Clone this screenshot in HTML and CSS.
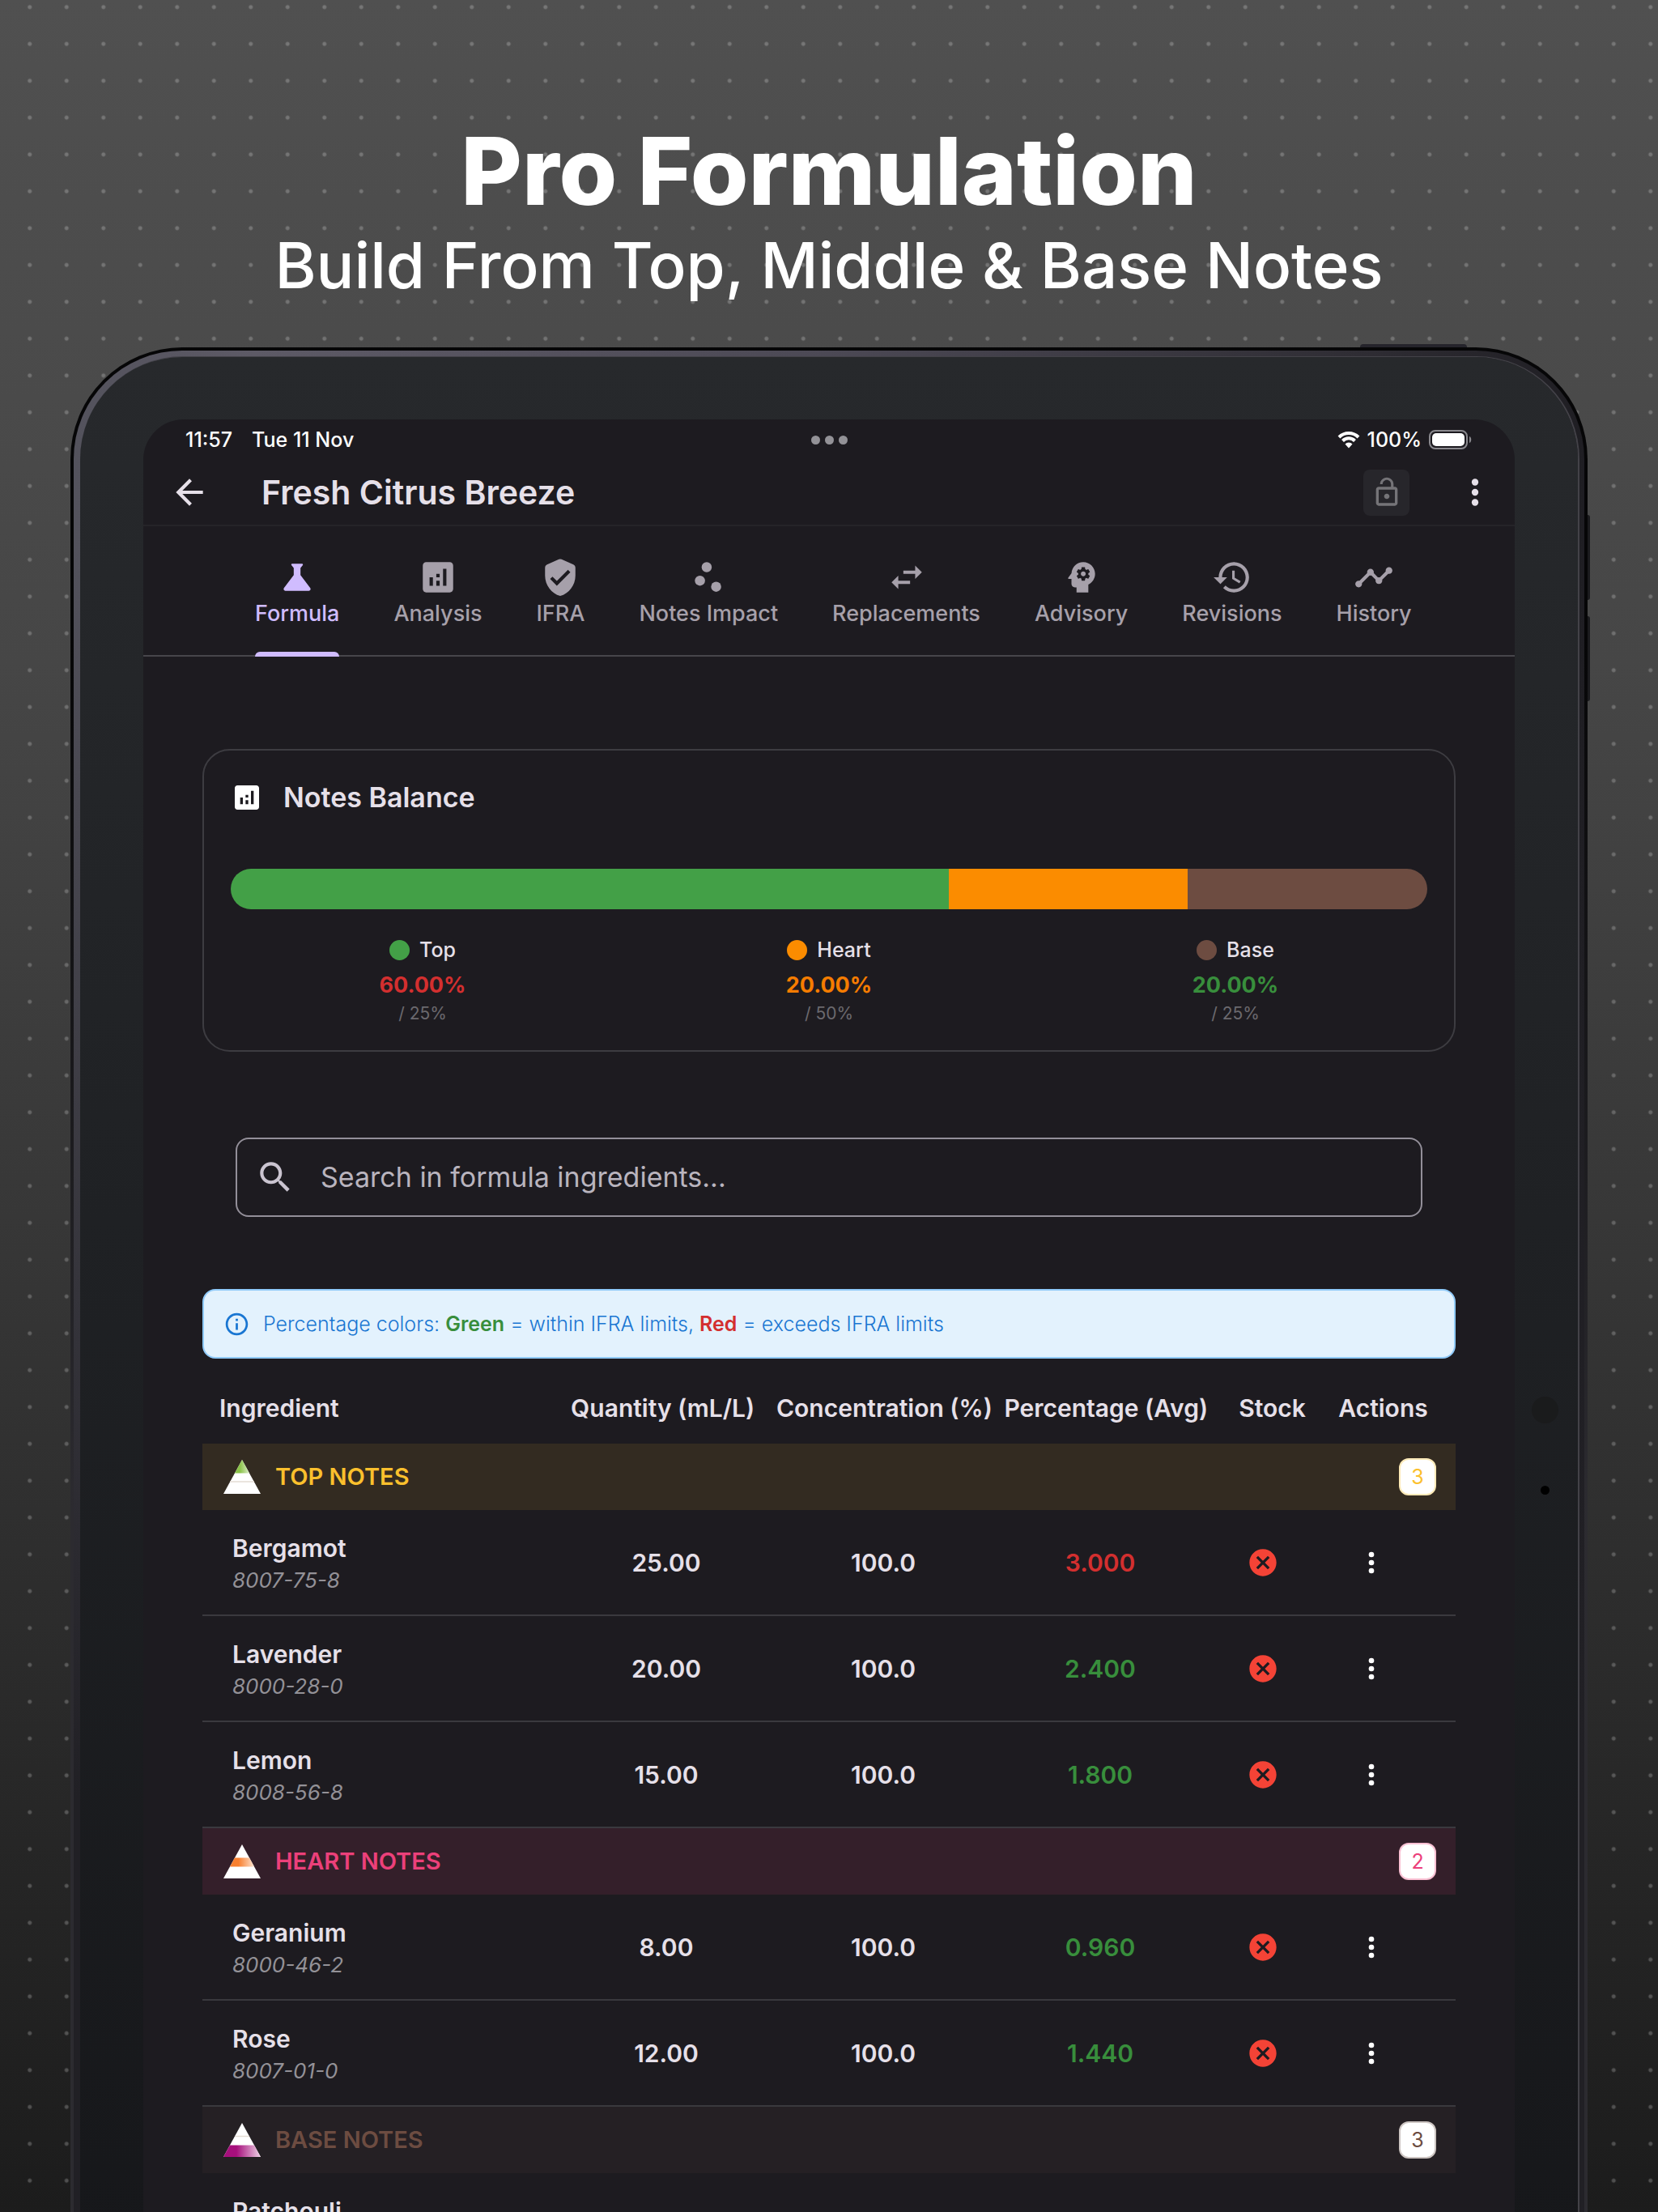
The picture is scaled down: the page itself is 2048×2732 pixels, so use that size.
FILE: index.html
```html
<!DOCTYPE html>
<html lang="en">

<head>
    <meta charset="UTF-8">
    <meta name="viewport" content="width=device-width, initial-scale=1.0">
    <title>Pro Formulation</title>
    <link rel="stylesheet" href="styles.css">
</head>

<body>
    <!-- shared icons -->
    <svg class="sprite" aria-hidden="true">
        <symbol id="i-back" viewBox="0 0 24 24"><path d="M20 11H7.83l5.59-5.59L12 4l-8 8 8 8 1.41-1.41L7.83 13H20v-2z"/></symbol>
        <symbol id="i-lock" viewBox="0 0 24 24"><path d="M12 17c1.1 0 2-.9 2-2s-.9-2-2-2-2 .9-2 2 .9 2 2 2zm6-9h-1V6c0-2.76-2.24-5-5-5S7 3.24 7 6h1.9c0-1.71 1.39-3.1 3.1-3.1 1.71 0 3.1 1.39 3.1 3.1v2H6c-1.1 0-2 .9-2 2v10c0 1.1.9 2 2 2h12c1.1 0 2-.9 2-2V10c0-1.1-.9-2-2-2zm0 12H6V10h12v10z"/></symbol>
        <symbol id="i-more" viewBox="0 0 24 24"><circle cx="12" cy="6" r="2"/><circle cx="12" cy="12" r="2"/><circle cx="12" cy="18" r="2"/></symbol>
        <symbol id="i-flask" viewBox="0 0 24 24"><path d="M19.8 18.4L14 10.67V6.5l1.35-1.69c.26-.33.03-.81-.39-.81H9.04c-.42 0-.65.48-.39.81L10 6.5v4.17L4.2 18.4c-.49.66-.02 1.6.8 1.6h14c.82 0 1.29-.94.8-1.6z"/></symbol>
        <symbol id="i-analytics" viewBox="0 0 24 24"><path d="M19 3H5c-1.1 0-2 .9-2 2v14c0 1.1.9 2 2 2h14c1.1 0 2-.9 2-2V5c0-1.1-.9-2-2-2zM9 17H7v-5h2v5zm4 0h-2v-3h2v3zm0-5h-2v-2h2v2zm4 5h-2V7h2v10z"/></symbol>
        <symbol id="i-shield" viewBox="0 0 24 24"><path d="M11.2 1.35L4.2 4.45C3.47 4.78 3 5.5 3 6.3V11c0 5.55 3.84 10.74 9 12 5.16-1.26 9-6.45 9-12V6.3c0-.8-.47-1.52-1.2-1.85l-7-3.1a2 2 0 0 0-1.6 0zM10 17l-4-4 1.41-1.41L10 14.17l6.59-6.59L18 9l-8 8z"/></symbol>
        <symbol id="i-scatter" viewBox="0 0 24 24"><circle cx="7" cy="14" r="3"/><circle cx="11" cy="6" r="3"/><circle cx="16.6" cy="17.6" r="3"/></symbol>
        <symbol id="i-swap" viewBox="0 0 24 24"><path d="M6.99 11L3 15l3.99 4v-3H14v-2H6.99v-3zM21 9l-3.99-4v3H10v2h7.01v3L21 9z"/></symbol>
        <symbol id="i-psychology" viewBox="0 0 24 24"><path d="M13 8.57c-.79 0-1.43.64-1.43 1.43s.64 1.43 1.43 1.43 1.43-.64 1.43-1.43-.64-1.43-1.43-1.43z"/><path d="M13 3C9.25 3 6.2 5.94 6.02 9.64L4.1 12.2c-.25.33-.01.8.4.8H6v3c0 1.1.9 2 2 2h1v3h7v-4.68c2.36-1.12 4-3.53 4-6.32 0-3.87-3.13-7-7-7zm3 7c0 .13-.01.26-.02.39l.83.66c.08.06.1.16.05.25l-.8 1.39c-.05.09-.16.12-.24.09l-.99-.4c-.21.16-.43.29-.67.39L14 13.83c-.01.1-.1.17-.2.17h-1.6c-.1 0-.18-.07-.2-.17l-.15-1.06c-.25-.1-.47-.23-.68-.39l-.99.4c-.09.03-.2 0-.25-.09l-.8-1.39c-.05-.08-.03-.19.05-.25l.84-.66c-.01-.13-.02-.26-.02-.39s.02-.27.04-.39l-.85-.66c-.08-.06-.1-.16-.05-.26l.8-1.38c.05-.09.15-.12.24-.09l1 .4c.2-.15.43-.29.67-.39L12 6.17c.02-.1.1-.17.2-.17h1.6c.1 0 .18.07.2.17l.15 1.06c.24.1.46.23.67.39l1-.4c.09-.03.2 0 .24.09l.8 1.38c.05.09.03.2-.05.26l-.85.66c.03.12.04.25.04.39z"/></symbol>
        <symbol id="i-history" viewBox="0 0 24 24"><path d="M13 3c-4.97 0-9 4.03-9 9H1l3.89 3.89.07.14L9 12H6c0-3.87 3.13-7 7-7s7 3.13 7 7-3.13 7-7 7c-1.93 0-3.68-.79-4.94-2.06l-1.42 1.42C8.27 19.99 10.51 21 13 21c4.97 0 9-4.03 9-9s-4.03-9-9-9zm-1 5v5l4.28 2.54.72-1.21-3.5-2.08V8H12z"/></symbol>
        <symbol id="i-timeline" viewBox="0 0 24 24"><path d="M23 8c0 1.1-.9 2-2 2-.18 0-.35-.02-.51-.07l-3.56 3.55c.05.16.07.34.07.52 0 1.1-.9 2-2 2s-2-.9-2-2c0-.18.02-.36.07-.52l-2.55-2.55c-.16.05-.34.07-.52.07s-.36-.02-.52-.07l-4.55 4.56c.05.16.07.33.07.51 0 1.1-.9 2-2 2s-2-.9-2-2 .9-2 2-2c.18 0 .35.02.51.07l4.56-4.55C8.02 9.36 8 9.18 8 9c0-1.1.9-2 2-2s2 .9 2 2c0 .18-.02.36-.07.52l2.55 2.55c.16-.05.34-.07.52-.07s.36.02.52.07l3.55-3.56C19.02 8.35 19 8.18 19 8c0-1.1.9-2 2-2s2 .9 2 2z"/></symbol>
        <symbol id="i-search" viewBox="0 0 24 24"><path d="M15.5 14h-.79l-.28-.27C15.41 12.59 16 11.11 16 9.5 16 5.91 13.09 3 9.5 3S3 5.91 3 9.5 5.91 16 9.5 16c1.61 0 3.09-.59 4.23-1.57l.27.28v.79l5 4.99L20.49 19l-4.99-5zm-6 0C7.01 14 5 11.99 5 9.5S7.01 5 9.5 5 14 7.01 14 9.5 11.99 14 9.5 14z"/></symbol>
        <symbol id="i-info" viewBox="0 0 24 24"><path d="M11 7h2v2h-2zm0 4h2v6h-2zm1-9C6.48 2 2 6.48 2 12s4.48 10 10 10 10-4.48 10-10S17.52 2 12 2zm0 18c-4.41 0-8-3.59-8-8s3.59-8 8-8 8 3.59 8 8-3.59 8-8 8z"/></symbol>
        <symbol id="i-cancel" viewBox="0 0 24 24"><path d="M12 2C6.47 2 2 6.47 2 12s4.47 10 10 10 10-4.47 10-10S17.53 2 12 2zm5 13.59L15.59 17 12 13.41 8.41 17 7 15.59 10.59 12 7 8.41 8.41 7 12 10.59 15.59 7 17 8.41 13.41 12 17 15.59z"/></symbol>
        <defs>
            <linearGradient id="g-top"><stop offset=".35" stop-color="#8bc34a"/><stop offset="1" stop-color="#dcedc8"/></linearGradient>
            <linearGradient id="g-heart"><stop offset=".35" stop-color="#f97f2e"/><stop offset="1" stop-color="#fde3d0"/></linearGradient>
            <linearGradient id="g-base"><stop offset=".35" stop-color="#a60f7c"/><stop offset="1" stop-color="#efd2e6"/></linearGradient>
        </defs>
    </svg>

    <header class="hero">
        <h1>Pro Formulation</h1>
        <p>Build From Top, Middle &amp; Base Notes</p>
    </header>

    <div class="device">
        <span class="power-key"></span>
        <span class="volume-key volume-up"></span>
        <span class="volume-key volume-down"></span>
        <div class="edge">
            <div class="bezel">
                <span class="sensor"></span>
                <span class="camera"></span>
                <div class="screen">
                    <div class="status-bar">
                        <div class="status-time"><span>11:57</span><span>Tue 11 Nov</span></div>
                        <div class="multitask"><i></i><i></i><i></i></div>
                        <div class="status-icons">
                            <svg class="wifi" viewBox="0 0 28 22"><path d="M2 8a17 17 0 0 1 24 0M6.500 12.500a10.500 10.500 0 0 1 15 0" fill="none" stroke="currentColor" stroke-width="4"/><path d="M14 21.500l-4.500-5a6 6 0 0 1 9 0z" fill="currentColor"/></svg>
                            <span>100%</span>
                            <svg class="battery" viewBox="0 0 54 24"><rect x="1" y="1" width="46" height="22" rx="7" fill="none" stroke="#8a898e" stroke-width="2"/><rect x="4" y="4" width="40" height="16" rx="5" fill="#fff"/><path d="M50 8c3 1 3 7 0 8z" fill="#8a898e"/></svg>
                        </div>
                    </div>

                    <div class="app-bar">
                        <button class="icon-button" aria-label="Back"><svg class="icon-lg"><use href="#i-back"/></svg></button>
                        <h2>Fresh Citrus Breeze</h2>
                        <button class="lock-button" aria-label="Lock"><svg class="icon-md"><use href="#i-lock"/></svg></button>
                        <button class="icon-button" aria-label="Menu"><svg class="icon-lg"><use href="#i-more"/></svg></button>
                    </div>

                    <nav class="tabs">
                        <a href="#formula" class="tab active"><svg class="icon-lg"><use href="#i-flask"/></svg>Formula</a>
                        <a href="#analysis" class="tab"><svg class="icon-lg"><use href="#i-analytics"/></svg>Analysis</a>
                        <a href="#ifra" class="tab"><svg class="icon-lg"><use href="#i-shield"/></svg>IFRA</a>
                        <a href="#impact" class="tab"><svg class="icon-lg"><use href="#i-scatter"/></svg>Notes Impact</a>
                        <a href="#replacements" class="tab"><svg class="icon-lg"><use href="#i-swap"/></svg>Replacements</a>
                        <a href="#advisory" class="tab"><svg class="icon-lg"><use href="#i-psychology"/></svg>Advisory</a>
                        <a href="#revisions" class="tab"><svg class="icon-lg"><use href="#i-history"/></svg>Revisions</a>
                        <a href="#history" class="tab"><svg class="icon-lg"><use href="#i-timeline"/></svg>History</a>
                    </nav>

                    <main>
                        <section class="card">
                            <h3><svg class="icon-md"><use href="#i-analytics"/></svg>Notes Balance</h3>
                            <div class="balance-bar">
                                <span class="bg-top" style="width: 60%"></span>
                                <span class="bg-heart" style="width: 20%"></span>
                                <span class="bg-base" style="width: 20%"></span>
                            </div>
                            <div class="legend">
                                <div class="legend-item">
                                    <span class="legend-name"><i class="bg-top"></i>Top</span>
                                    <strong class="over">60.00%</strong>
                                    <small>/ 25%</small>
                                </div>
                                <div class="legend-item">
                                    <span class="legend-name"><i class="bg-heart"></i>Heart</span>
                                    <strong class="under">20.00%</strong>
                                    <small>/ 50%</small>
                                </div>
                                <div class="legend-item">
                                    <span class="legend-name"><i class="bg-base"></i>Base</span>
                                    <strong class="ok">20.00%</strong>
                                    <small>/ 25%</small>
                                </div>
                            </div>
                        </section>

                        <label class="search">
                            <svg class="icon-lg"><use href="#i-search"/></svg>
                            <input type="text" placeholder="Search in formula ingredients..." aria-label="Search in formula ingredients">
                        </label>

                        <div class="info">
                            <svg class="icon-sm"><use href="#i-info"/></svg>
                            <p>Percentage colors: <b class="ok">Green</b> = within IFRA limits, <b class="over">Red</b> = exceeds IFRA limits</p>
                        </div>

                        <table class="ingredients">
                            <thead>
                                <tr>
                                    <th>Ingredient</th>
                                    <th>Quantity (mL/L)</th>
                                    <th>Concentration (%)</th>
                                    <th>Percentage (Avg)</th>
                                    <th>Stock</th>
                                    <th>Actions</th>
                                </tr>
                            </thead>
                            <tbody>
                                <tr class="group group-top">
                                    <th colspan="6">
                                        <svg class="pyramid" viewBox="0 0 46 42"><path d="M23 0l23 42H0z" fill="#fff"/><path d="M23 0l9 16.500H14z" fill="url(#g-top)"/><path d="M8 27h30" stroke="#e4dcd4" stroke-width="1.500"/></svg>
                                        <span>TOP NOTES</span>
                                        <span class="count">3</span>
                                    </th>
                                </tr>
                                <tr>
                                    <td><b>Bergamot</b><em>8007-75-8</em></td>
                                    <td>25.00</td>
                                    <td>100.0</td>
                                    <td class="over">3.000</td>
                                    <td><svg class="icon-md out"><use href="#i-cancel"/></svg></td>
                                    <td><button class="icon-button" aria-label="Actions"><svg class="icon-md"><use href="#i-more"/></svg></button></td>
                                </tr>
                                <tr>
                                    <td><b>Lavender</b><em>8000-28-0</em></td>
                                    <td>20.00</td>
                                    <td>100.0</td>
                                    <td class="ok">2.400</td>
                                    <td><svg class="icon-md out"><use href="#i-cancel"/></svg></td>
                                    <td><button class="icon-button" aria-label="Actions"><svg class="icon-md"><use href="#i-more"/></svg></button></td>
                                </tr>
                                <tr>
                                    <td><b>Lemon</b><em>8008-56-8</em></td>
                                    <td>15.00</td>
                                    <td>100.0</td>
                                    <td class="ok">1.800</td>
                                    <td><svg class="icon-md out"><use href="#i-cancel"/></svg></td>
                                    <td><button class="icon-button" aria-label="Actions"><svg class="icon-md"><use href="#i-more"/></svg></button></td>
                                </tr>
                                <tr class="group group-heart">
                                    <th colspan="6">
                                        <svg class="pyramid" viewBox="0 0 46 42"><path d="M23 0l23 42H0z" fill="#fff"/><path d="M14 16.500h18l6 11H8z" fill="url(#g-heart)"/></svg>
                                        <span>HEART NOTES</span>
                                        <span class="count">2</span>
                                    </th>
                                </tr>
                                <tr>
                                    <td><b>Geranium</b><em>8000-46-2</em></td>
                                    <td>8.00</td>
                                    <td>100.0</td>
                                    <td class="ok">0.960</td>
                                    <td><svg class="icon-md out"><use href="#i-cancel"/></svg></td>
                                    <td><button class="icon-button" aria-label="Actions"><svg class="icon-md"><use href="#i-more"/></svg></button></td>
                                </tr>
                                <tr>
                                    <td><b>Rose</b><em>8007-01-0</em></td>
                                    <td>12.00</td>
                                    <td>100.0</td>
                                    <td class="ok">1.440</td>
                                    <td><svg class="icon-md out"><use href="#i-cancel"/></svg></td>
                                    <td><button class="icon-button" aria-label="Actions"><svg class="icon-md"><use href="#i-more"/></svg></button></td>
                                </tr>
                                <tr class="group group-base">
                                    <th colspan="6">
                                        <svg class="pyramid" viewBox="0 0 46 42"><path d="M23 0l23 42H0z" fill="#fff"/><path d="M14 16.500h18" stroke="#e4dcd4" stroke-width="1.500"/><path d="M8 27.500h30L46 42H0z" fill="url(#g-base)"/></svg>
                                        <span>BASE NOTES</span>
                                        <span class="count">3</span>
                                    </th>
                                </tr>
                                <tr>
                                    <td><b>Patchouli</b><em>&nbsp;</em></td>
                                    <td></td>
                                    <td></td>
                                    <td></td>
                                    <td><svg class="icon-md out"><use href="#i-cancel"/></svg></td>
                                    <td><button class="icon-button" aria-label="Actions"><svg class="icon-md"><use href="#i-more"/></svg></button></td>
                                </tr>
                            </tbody>
                        </table>
                    </main>
                </div>
            </div>
        </div>
    </div>
</body>

</html>
```
FILE: styles.css
```css
* {
    box-sizing: border-box;
    margin: 0;
    padding: 0;
}

body {
    height: 100vh;
    overflow: hidden;
    font-family: Inter, 'Liberation Sans', sans-serif;
    -webkit-font-smoothing: antialiased;
    color: #e6e0e9;
    background-image:
        radial-gradient(circle, rgba(255, 255, 255, 0.22) 2px, transparent 3px),
        linear-gradient(#505050, #464646 30%, #1c1c1c);
    background-size: calc(100vw / 45) calc(100vw / 45), 100% 100%;
    background-position: 14px -14px, 0 0;
}

button {
    border: none;
    background: none;
    color: inherit;
    cursor: pointer;
}

a {
    color: inherit;
    text-decoration: none;
}

svg {
    display: block;
    flex: none;
    fill: currentColor;
}

.sprite {
    position: absolute;
    width: 0;
    height: 0;
}

.icon-sm {
    width: 33px;
    height: 33px;
}

.icon-md {
    width: 40px;
    height: 40px;
}

.icon-lg {
    width: 50px;
    height: 50px;
}

.over {
    color: #d32f2f;
}

.under {
    color: #f57c00;
}

.ok {
    color: #388e3c;
}

.bg-top {
    background: #43a047;
}

.bg-heart {
    background: #fb8c00;
}

.bg-base {
    background: #6d4c41;
}

/* Hero */

.hero {
    padding: 151px 0 48px;
    text-align: center;
    color: #fff;
}

.hero h1 {
    font-size: 116px;
    line-height: 120px;
    font-weight: 800;
}

.hero p {
    margin-top: 4px;
    font-size: 78px;
    line-height: 106px;
    font-weight: 500;
}

/* Tablet frame */

.device {
    position: relative;
    margin: 0 87px;
    padding: 4px 4px 0;
    border-radius: 138px 138px 0 0;
    background: linear-gradient(#060607 15%, #2c2b30 60%);
}

.edge {
    padding: 8px 8px 0;
    border-radius: 134px 134px 0 0;
    background:
        linear-gradient(transparent 10%, #212025 75%),
        linear-gradient(to right, #53525c, #5d5a66 12%, #4c4955 50%, #2f2d34 85%, #1f1e23);
}

.bezel {
    position: relative;
    padding: 77px 78px 0;
    border-radius: 126px 126px 0 0;
    background: linear-gradient(#27292c, #1f2124 45%, #16171a);
    box-shadow: 1px 0 0 1px #434248;
}

.power-key {
    position: absolute;
    top: -4px;
    right: 149px;
    width: 132px;
    height: 4px;
    border-radius: 4px 4px 0 0;
    background: #25242b;
}

.volume-key {
    position: absolute;
    right: -3px;
    width: 3px;
    height: 105px;
    border-radius: 0 3px 3px 0;
    background: #1b1b1e;
}

.volume-up {
    top: 207px;
}

.volume-down {
    top: 332px;
}

.sensor,
.camera {
    position: absolute;
    border-radius: 50%;
}

.sensor {
    top: 1284px;
    right: 24px;
    width: 33px;
    height: 33px;
    background: #1a1b1c;
}

.camera {
    top: 1394px;
    right: 35px;
    width: 11px;
    height: 11px;
    background: #000;
}

.screen {
    border-radius: 50px 50px 0 0;
    background: #1d1b20;
}

/* Status bar */

.status-bar {
    display: grid;
    grid-template-columns: 1fr auto 1fr;
    align-items: center;
    height: 50px;
    padding: 0 52px;
    font-size: 25px;
    line-height: 30px;
    font-weight: 500;
    color: #fff;
}

.status-time {
    display: flex;
    gap: 24px;
}

.multitask {
    display: flex;
    gap: 6px;
}

.multitask i {
    width: 11px;
    height: 11px;
    border-radius: 50%;
    background: #939297;
}

.status-icons {
    display: flex;
    justify-content: flex-end;
    align-items: center;
    gap: 9px;
}

.wifi {
    width: 28px;
    height: 22px;
}

.battery {
    width: 54px;
    height: 24px;
}

/* App bar */

.icon-button {
    display: flex;
}

.app-bar {
    display: flex;
    align-items: center;
    height: 82px;
    padding: 0 24px 0 32px;
    border-bottom: 2px solid #252428;
}

.app-bar h2 {
    flex: 1;
    margin-left: 64px;
    font-size: 41px;
    line-height: 52px;
    font-weight: 600;
}

.lock-button {
    display: flex;
    justify-content: center;
    align-items: center;
    width: 57px;
    height: 57px;
    margin-right: 56px;
    border-radius: 8px;
    background: #27262b;
    color: #757478;
}

/* Tabs */

.tabs {
    display: flex;
    gap: 67px;
    height: 161px;
    padding-left: 138px;
    border-bottom: 2px solid #47464b;
    color: #a6a0aa;
}

.tab {
    display: flex;
    flex-direction: column;
    align-items: center;
    gap: 4px;
    height: 161px;
    padding-top: 38px;
    font-size: 27px;
    line-height: 32px;
    font-weight: 500;
    white-space: nowrap;
}

.tab.active {
    color: #d0bcff;
}

.tab.active::after {
    content: '';
    width: 100%;
    height: 6px;
    margin-top: auto;
    border-radius: 6px 6px 0 0;
    background: #d0bcff;
}

main {
    padding: 114px 73px 0;
}

/* Notes balance */

.card {
    height: 374px;
    padding: 38px 19px 0;
    border: 2px solid #3d3c41;
    border-radius: 34px;
}

.card h3 {
    display: flex;
    align-items: center;
    gap: 25px;
    margin: 0 14px;
    font-size: 34px;
    line-height: 40px;
    font-weight: 600;
}

.card h3 svg {
    color: #fff;
}

.balance-bar {
    display: flex;
    height: 50px;
    margin: 68px 14px 36px;
    border-radius: 25px;
    overflow: hidden;
}

.legend {
    display: flex;
}

.legend-item {
    display: flex;
    flex: 1;
    flex-direction: column;
    align-items: center;
}

.legend-name {
    display: flex;
    align-items: center;
    gap: 12px;
    font-size: 25px;
    line-height: 28px;
    font-weight: 500;
}

.legend-name i {
    width: 25px;
    height: 25px;
    border-radius: 50%;
}

.legend-item strong {
    margin-top: 14px;
    font-size: 27px;
    line-height: 32px;
    font-weight: 700;
}

.legend-item small {
    margin-top: 6px;
    font-size: 21px;
    line-height: 26px;
    color: #6b696e;
}

/* Search */

.search {
    display: flex;
    align-items: center;
    gap: 31px;
    height: 98px;
    margin: 106px 41px 89px;
    padding: 0 22px;
    border: 2px solid #938f99;
    border-radius: 16px;
    color: #cac4d0;
}

.search input {
    flex: 1;
    border: none;
    outline: none;
    background: none;
    font: inherit;
    font-size: 34px;
    line-height: 40px;
    color: inherit;
}

.search input::placeholder {
    color: #b9b4be;
}

/* Info banner */

.info {
    display: flex;
    align-items: center;
    gap: 16px;
    height: 86px;
    padding: 0 24px;
    border: 2px solid #90caf9;
    border-radius: 16px;
    background: #e3f2fd;
    color: #1976d2;
    font-size: 25px;
    line-height: 32px;
    font-weight: 300;
}

.info b {
    font-weight: 600;
}

/* Ingredients */

.ingredients,
.ingredients thead,
.ingredients tbody {
    display: block;
}

.ingredients tr {
    display: flex;
    align-items: center;
    height: 131px;
    padding: 0 37px;
    border-bottom: 2px solid #3a393e;
    font-size: 30px;
    line-height: 34px;
    font-weight: 600;
}

.ingredients thead tr {
    height: 105px;
    padding: 16px 21px 0;
    border-bottom: none;
}

.ingredients th,
.ingredients td {
    display: flex;
    flex: 2 2 0;
    justify-content: center;
    font-weight: 600;
    white-space: nowrap;
}

.ingredients tr > :first-child {
    flex-grow: 3;
    justify-content: flex-start;
}

.ingredients tr > :nth-child(n+5) {
    flex-grow: 1;
}

.ingredients td:first-child {
    flex-direction: column;
    gap: 8px;
    padding-top: 3px;
}

.ingredients b {
    font-weight: 600;
}

.ingredients em {
    font-size: 26px;
    line-height: 30px;
    font-weight: 400;
    color: #939197;
}

.ingredients .icon-button {
    color: #fff;
}

.out {
    color: #f44336;
}

.ingredients .group {
    height: 82px;
    padding: 0 24px 0 26px;
    border-bottom: none;
    font-size: 29px;
}

.group th {
    align-items: center;
    gap: 18px;
}

.pyramid {
    width: 46px;
    height: 42px;
}

.count {
    display: flex;
    justify-content: center;
    align-items: center;
    width: 46px;
    height: 46px;
    margin-left: auto;
    border: 2px solid;
    border-radius: 12px;
    background: #fff;
    font-size: 25px;
    font-weight: 400;
}

.group-top {
    background: #332b21;
    color: #fbc02d;
}

.group-top .count {
    border-color: #fdeab8;
}

.group-heart {
    background: #341f2a;
    color: #ec407a;
}

.group-heart .count {
    border-color: #f9c0d3;
}

.group-base {
    background: #252024;
    color: #6d4c41;
}

.group-base .count {
    border-color: #cdc5c2;
}
```
